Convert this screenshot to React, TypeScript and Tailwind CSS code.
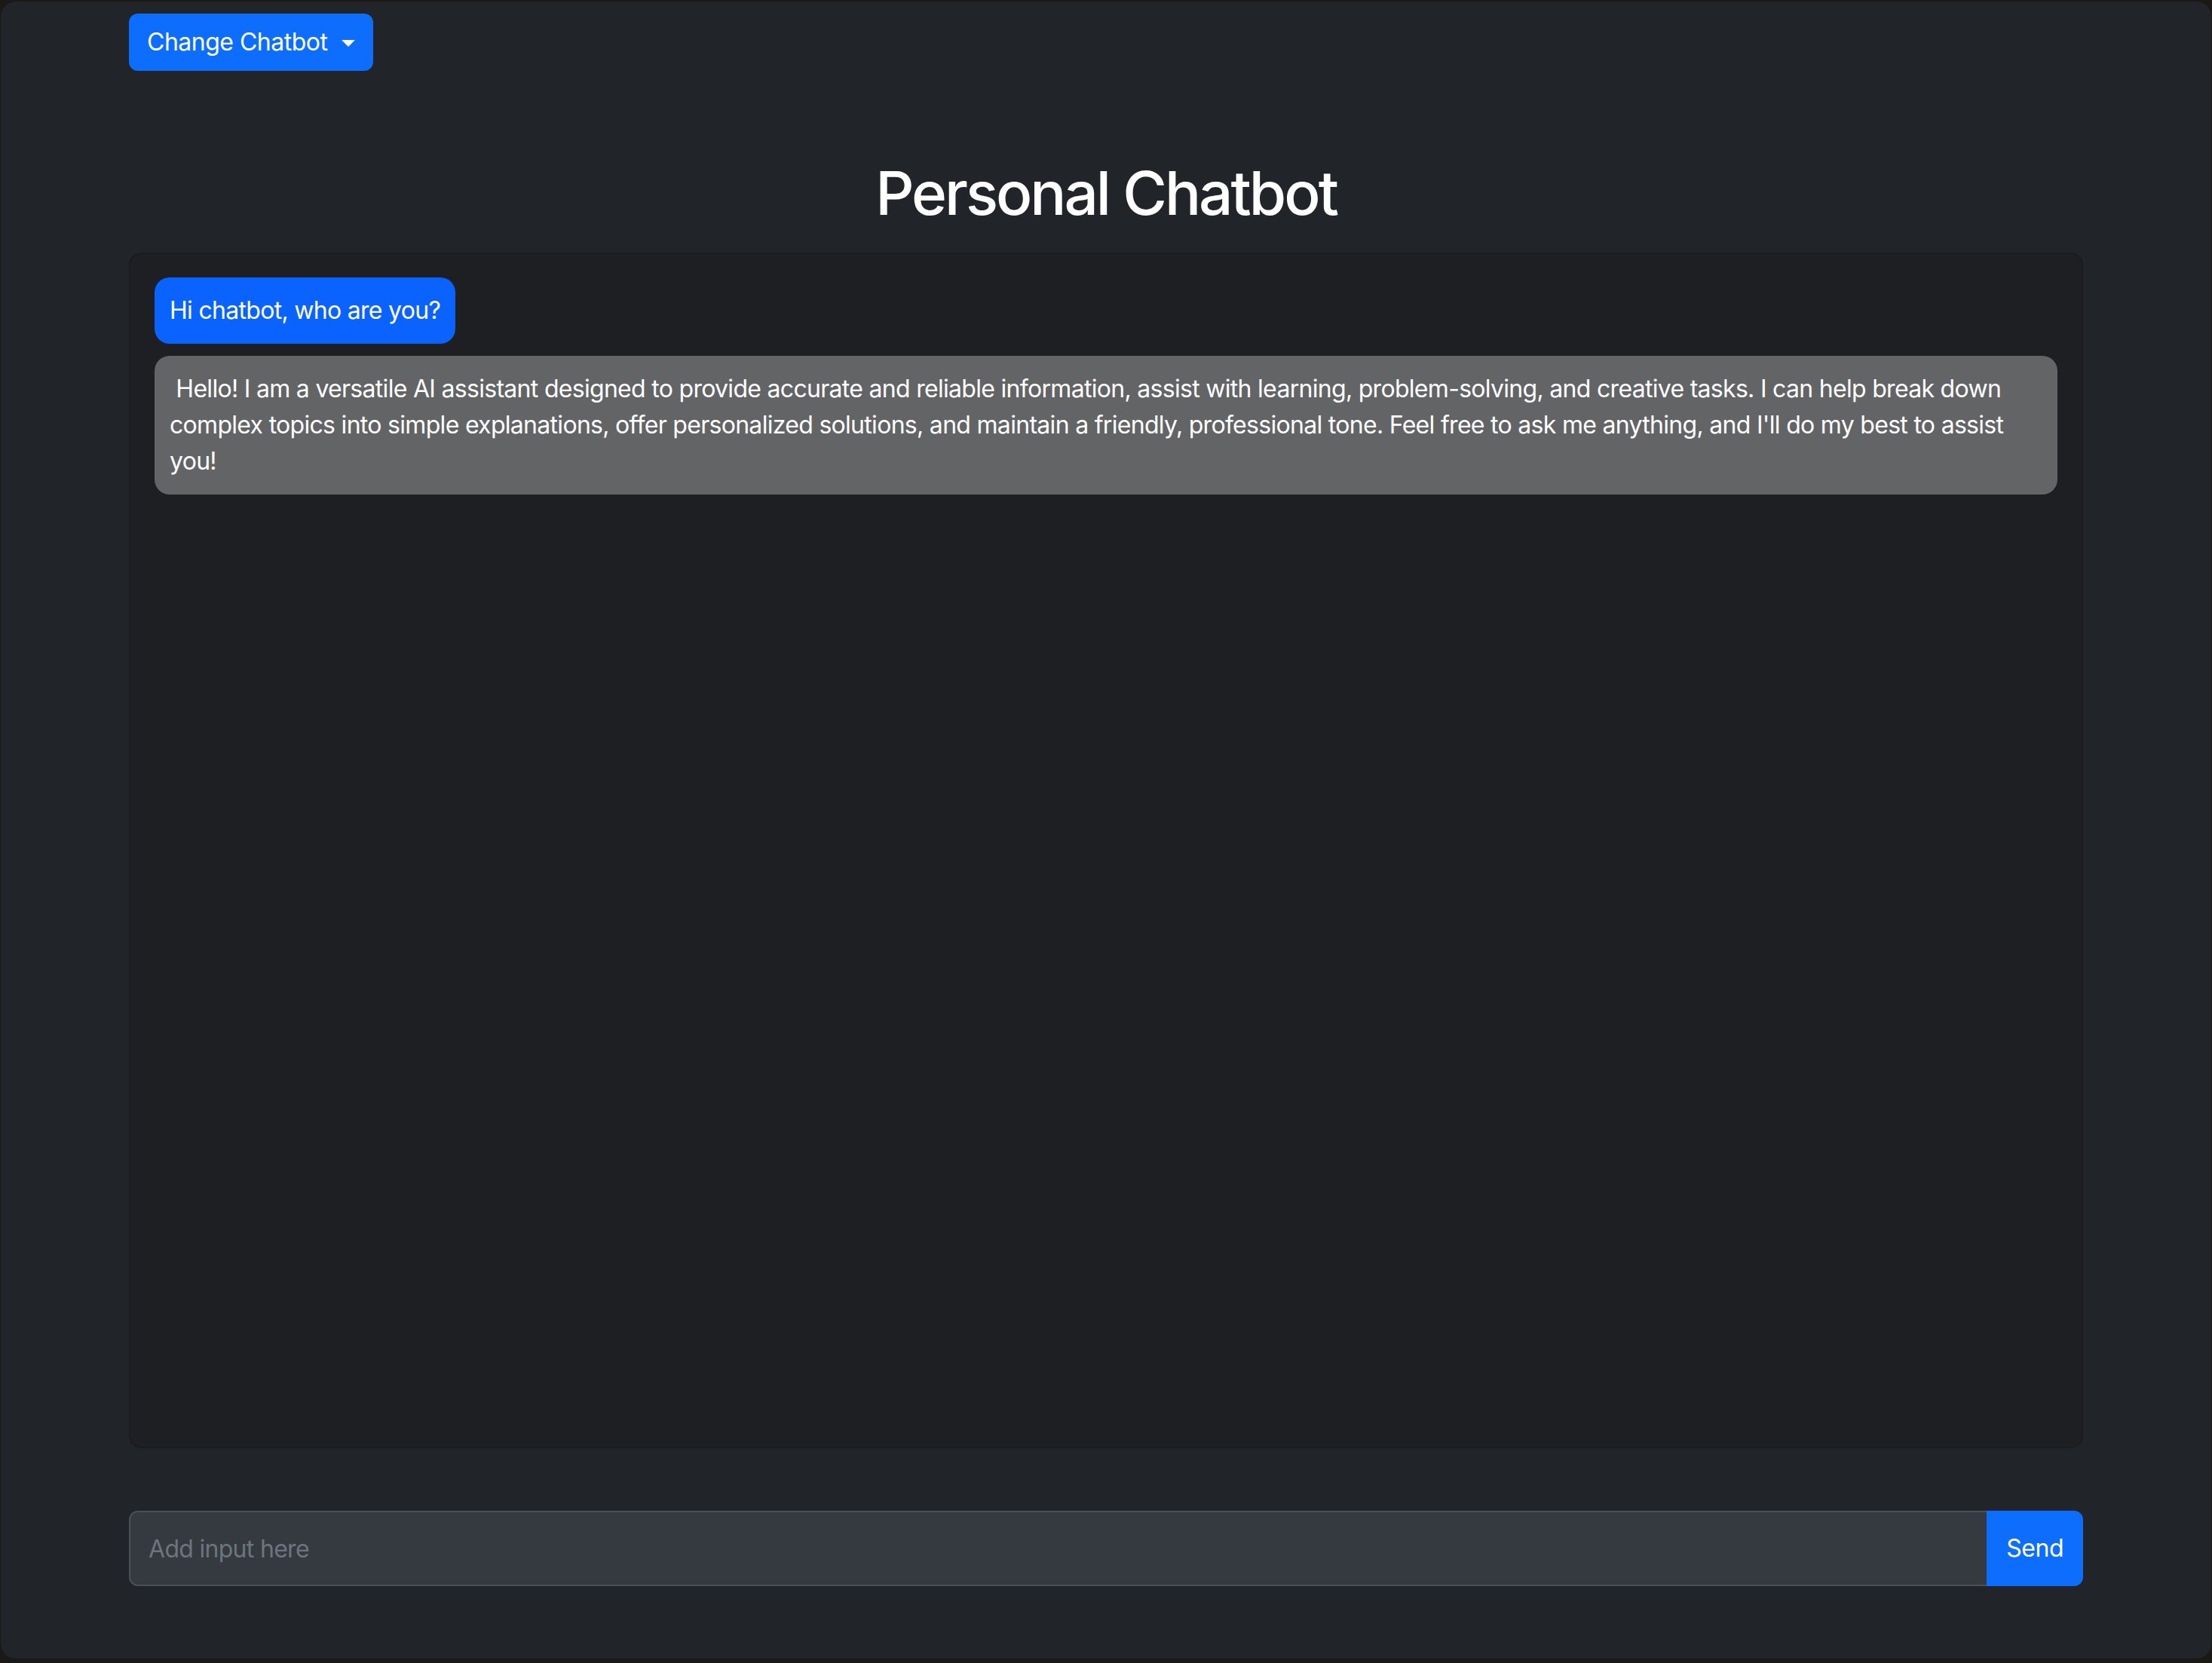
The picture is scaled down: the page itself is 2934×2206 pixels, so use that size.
function App() {
  const mensajes = [
    {
      id: 1,
      de: "user",
      texto: "Hi chatbot, who are you?",
    },
    {
      id: 2,
      de: "bot",
      texto:
        " Hello! I am a versatile AI assistant designed to provide accurate and reliable information, assist with learning, problem-solving, and creative tasks. I can help break down complex topics into simple explanations, offer personalized solutions, and maintain a friendly, professional tone. Feel free to ask me anything, and I'll do my best to assist you!",
    },
  ];

  return (
    <div className="w-[2934px] h-[2206px] bg-[#1a1916] pt-[2px] pb-[6px] px-[1px] font-['Inter','Noto_Sans',sans-serif] tracking-[-0.7px]">
      <div className="h-full rounded-[20px] bg-[#212529] flex flex-col items-center">
        <div className="w-[2592px] flex flex-col">
          {/* boton de arriba */}
          <div className="pt-[16px]">
            <button className="h-[76px] bg-[#0d6efd] text-white text-[32px] leading-[48px] px-[24px] rounded-[12px] inline-flex items-center tracking-[-0.5px]">
              Change Chatbot
              <span className="ml-[19px] mt-[2px] w-0 h-0 border-t-[9px] border-t-white border-x-[9.5px] border-x-transparent"></span>
            </button>
          </div>

          <h1 className="mt-[114px] text-center text-white text-[80px] leading-[96px] font-medium tracking-[-3px]">
            Personal Chatbot
          </h1>

          <div className="mt-[31px] h-[1586px] bg-[#1e1f22] border-2 border-[#1b1c1f] rounded-[16px] p-[31px] pl-[32px] pr-[32px] flex flex-col items-start gap-[16px]">
            {mensajes.map((m) =>
              m.de === "user" ? (
                <div
                  key={m.id}
                  className="bg-[#0a62ff] text-white text-[32px] leading-[48px] p-[20px] rounded-[20px]"
                >
                  {m.texto}
                </div>
              ) : (
                <div
                  key={m.id}
                  className="w-full bg-[#636466] text-white text-[32px] leading-[48px] p-[20px] rounded-[20px] whitespace-pre-wrap"
                >
                  {m.texto}
                </div>
              )
            )}
          </div>

          {/* input de abajo */}
          <div className="mt-[83px] flex h-[100px]">
            <input
              type="text"
              className="flex-1 h-full bg-[#343a40] border-2 border-r-0 border-[#495057] rounded-l-[12px] px-[24px] text-[32px] text-white tracking-[-0.7px] placeholder:text-[#6c757d] outline-none"
              placeholder="Add input here"
            />
            <button className="h-full bg-[#0d6efd] text-white text-[32px] px-[26px] rounded-r-[12px] tracking-[-0.5px]">
              Send
            </button>
          </div>
        </div>
      </div>
    </div>
  );
}

export default App;
